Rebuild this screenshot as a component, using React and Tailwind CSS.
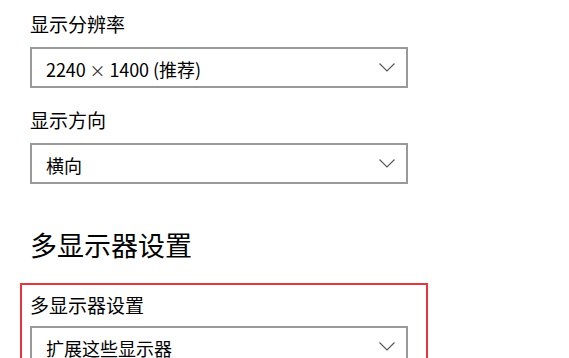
import React from "react";

const font = { fontFamily: '"Microsoft YaHei", "Noto Sans CJK SC", "Noto Sans", sans-serif' };

function Chevron() {
  return (
    <svg width="16" height="9" viewBox="0 0 16 9" className="shrink-0">
      <path d="M0.5 0.5 L8 8 L15.5 0.5" fill="none" stroke="#555" strokeWidth="1.1" />
    </svg>
  );
}

function Select({ children }) {
  return (
    <div className="w-[378px] h-[41px] border-2 border-[#999999] bg-white flex items-center pl-[14px] pr-[11px]">
      <span className="flex-1 text-[18px] text-black leading-none pt-[2px] whitespace-pre">{children}</span>
      <Chevron />
    </div>
  );
}

export default function App() {
  return (
    <div className="w-[569px] h-[358px] overflow-hidden bg-white text-black" style={font}>
      <div className="pl-[30px] pt-[11px]">
        <div className="text-[19px] leading-[26px]">显示分辨率</div>
        <div className="mt-[10px]">
          <Select>
            <span className="tracking-[-0.1px]">{"2240 "}</span>
            <span className="text-[16px] text-[#333]">×</span>
            <span className="tracking-[-0.1px]">{" 1400 ("}</span>
            推荐
            <span>)</span>
          </Select>
        </div>
        <div className="mt-[19px] text-[19px] leading-[26px]">显示方向</div>
        <div className="mt-[10px]">
          <Select>横向</Select>
        </div>
      </div>
      <div className="pl-[30px] mt-[44px] text-[27px] leading-[34px]">多显示器设置</div>
      <div className="ml-[20px] mt-[21px] w-[408px] border-2 border-[#e8363c] pl-[8px] pt-[7px] pb-[20px]">
        <div className="text-[19px] leading-[25px]">多显示器设置</div>
        <div className="mt-[9px]">
          <Select>扩展这些显示器</Select>
        </div>
      </div>
    </div>
  );
}
